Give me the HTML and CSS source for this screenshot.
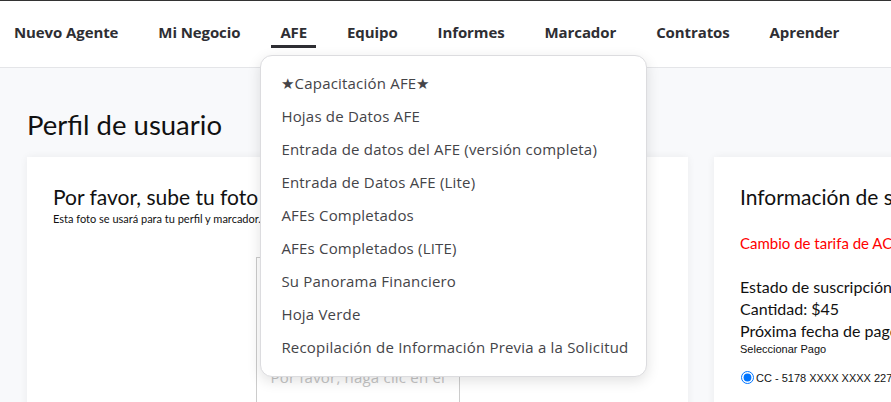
FILE: index.html
```html
<!DOCTYPE html>
<html lang="es">
<head>
<meta charset="utf-8">
<title>Perfil de usuario</title>
<link rel="stylesheet" href="styles.css">
</head>
<body>
<header class="topbar">
  <nav class="nav">
    <a class="nav-link">Nuevo Agente</a>
    <a class="nav-link">Mi Negocio</a>
    <div class="nav-item">
      <a class="nav-link active">AFE</a>
      <ul class="dropdown">
        <li>★Capacitación AFE★</li>
        <li>Hojas de Datos AFE</li>
        <li>Entrada de datos del AFE (versión completa)</li>
        <li>Entrada de Datos AFE (Lite)</li>
        <li>AFEs Completados</li>
        <li>AFEs Completados (LITE)</li>
        <li>Su Panorama Financiero</li>
        <li>Hoja Verde</li>
        <li>Recopilación de Información Previa a la Solicitud</li>
      </ul>
    </div>
    <a class="nav-link">Equipo</a>
    <a class="nav-link">Informes</a>
    <a class="nav-link">Marcador</a>
    <a class="nav-link">Contratos</a>
    <a class="nav-link">Aprender</a>
  </nav>
</header>
<main class="page">
  <h1 class="page-title">Perfil de usuario</h1>
  <div class="cards">
    <section class="card">
      <h2 class="card-title">Por favor, sube tu foto</h2>
      <p class="card-sub">Esta foto se usará para tu perfil y marcador.</p>
      <div class="photo-box">
        <span class="photo-hint">Por favor, haga clic en el</span>
      </div>
    </section>
    <section class="card">
      <h2 class="card-title">Información de suscripción</h2>
      <p class="notice">Cambio de tarifa de ACTUALIZACIÓN</p>
      <p class="info">Estado de suscripción: Activo</p>
      <p class="info">Cantidad: $45</p>
      <p class="info">Próxima fecha de pago: 01/01</p>
      <p class="small">Seleccionar Pago</p>
      <label class="pay"><input type="radio" checked> CC - 5178 XXXX XXXX 2270</label>
    </section>
  </div>
</main>
</body>
</html>
```
FILE: styles.css
```css
html, body { margin: 0; padding: 0; }
body {
  background: #f8f9fb;
  border-top: 1px solid #333;
  overflow: hidden;
  width: 891px;
  height: 401px;
  font-family: "Open Sans", "Noto Sans", sans-serif;
}
.topbar {
  background: #fff;
  height: 66px;
  border-bottom: 1px solid #e4e5e8;
}
.nav {
  display: flex;
  align-items: flex-start;
  gap: 22px;
  padding: 21px 0 0 5px;
}
.nav-item { position: relative; }
.nav-link {
  display: block;
  padding: 0 9px 3px;
  font-size: 15px;
  font-weight: 700;
  letter-spacing: -0.1px;
  color: #2e2e33;
  line-height: 20px;
  border-bottom: 3px solid transparent;
  white-space: nowrap;
}
.nav-link.active { border-bottom-color: #2e2e33; }
.dropdown {
  position: absolute;
  left: -11px;
  top: 33px;
  width: 385px;
  margin: 0;
  padding: 11px 0 12px;
  list-style: none;
  background: #fff;
  border: 1px solid #dcdcdf;
  border-radius: 12px;
  box-shadow: 0 4px 14px rgba(0,0,0,0.12);
  z-index: 10;
}
.dropdown li {
  line-height: 33px;
  padding-left: 20px;
  font-size: 15px;
  letter-spacing: 0.2px;
  color: #444448;
  white-space: nowrap;
}
.page { padding: 0 27px; }
.page-title {
  margin: 40px 0 15px;
  font-family: Lato, sans-serif;
  font-weight: 400;
  font-size: 27.5px;
  line-height: 34px;
  color: #111;
}
.cards {
  display: grid;
  grid-template-columns: 661px 661px;
  gap: 26px;
}
.card {
  background: #fff;
  box-shadow: 0 0 8px rgba(0,0,0,0.06);
  padding: 27px 26px 0;
  height: 260px;
}
.card-title {
  margin: 0;
  font-family: Lato, sans-serif;
  font-weight: 400;
  font-size: 21px;
  line-height: 26px;
  color: #111;
  white-space: nowrap;
}
.card-sub {
  margin: 2px 0 0;
  font-family: Lato, sans-serif;
  font-size: 11px;
  color: #111;
}
.photo-box {
  margin: 32px auto 0;
  width: 202px;
  height: 200px;
  border-left: 1px solid #ccc;
  border-right: 1px solid #ccc;
  border-top: 1px solid #ccc;
  position: relative;
}
.photo-hint {
  position: absolute;
  left: 14px;
  top: 109px;
  font-size: 15px;
  letter-spacing: 0.2px;
  color: #c4c4c4;
  white-space: nowrap;
}
.notice {
  margin: 24px 0 0;
  font-family: Lato, sans-serif;
  font-size: 15px;
  color: #f00;
  white-space: nowrap;
}
.info {
  margin: 0;
  font-family: Lato, sans-serif;
  font-size: 16px;
  line-height: 22px;
  color: #111;
  white-space: nowrap;
}
.notice + .info { margin-top: 24px; }
.small {
  margin: 0;
  font-family: "Liberation Sans", Arial, sans-serif;
  font-size: 11px;
  line-height: 14px;
  color: #111;
}
.pay {
  display: flex;
  align-items: center;
  gap: 2px;
  margin-top: 15px;
  font-family: "Liberation Sans", Arial, sans-serif;
  font-size: 11px;
  color: #111;
  white-space: nowrap;
}
.pay input { margin: 0 0 0 1px; width: 13px; height: 13px; }
```
